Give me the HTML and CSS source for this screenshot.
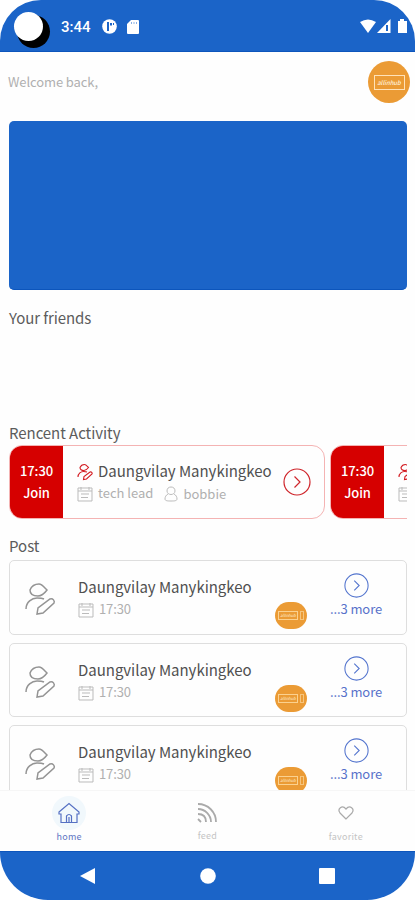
FILE: index.html
```html
<!DOCTYPE html>
<html lang="en">
<head>
<meta charset="utf-8">
<title>Home</title>
<link rel="stylesheet" href="styles.css">
</head>
<body>
<svg class="defs" width="0" height="0" aria-hidden="true">
  <symbol id="user-edit" viewBox="0 0 32 34">
    <path d="M6 8C8 3 11 2 15 2C18 2 20 5 23 8C20 12 18 14 14 14C9 14 6 12 6 8ZM2 27C2 20 8 16 13 16C16 16 18 16 20 17M13 32L14 26L26 17C29 16 31 19 30 21L19 31Z"/>
  </symbol>
  <symbol id="calendar" viewBox="0 0 16 16">
    <path d="M1 2H15V15H1ZM1 5H15M4 1V4M12 1V4M4 8H12M4 11.5H11"/>
  </symbol>
  <symbol id="person" viewBox="0 0 14 16">
    <path d="M7 1C4.500 1 3 2.500 3 5C3 7.200 5 8.500 7 8.500S11 7.200 11 5C11 2.500 9.500 1 7 1ZM4 8C2 9 1 11 1 13C1 15 4 15 7 15S13 15 13 13C13 11 12 9 10 8"/>
  </symbol>
  <symbol id="arrow" viewBox="0 0 28 28">
    <circle cx="14" cy="14" r="13"/><path d="M11.500 8.500L17 14L11.500 19.500"/>
  </symbol>
</svg>
<div class="phone">
  <header class="status">
    <span class="camera"></span>
    <span class="clock">3:44</span>
    <svg class="app" viewBox="0 0 15 15"><circle cx="7.500" cy="7.500" r="7.300" fill="#fff"/><path d="M5 3H7V12H5ZM8 4H10V6.500H8ZM11 4H12V6H11Z" fill="#1b64c8"/></svg>
    <svg class="sd" viewBox="0 0 12 14"><path d="M4 0H11Q12 0 12 1V13Q12 14 11 14H1Q0 14 0 13V4Z" fill="#fff"/><path d="M4 2H5V4H4ZM6.500 2H7.500V4H6.500ZM9 2H10V4H9Z" fill="#8bb0e4"/></svg>
    <span class="spacer"></span>
    <svg class="signals" viewBox="0 0 48 15"><path d="M0 3Q8 -2 16 3L8 14Z" fill="#fff"/><path d="M17 14L30.500 0V14Z" fill="#fff"/><path d="M26 6H28V12H26Z" fill="#1b64c8"/><path d="M38 2H40V0H44V2H47V14H38Z" fill="#fff"/></svg>
  </header>
  <main class="content">
    <div class="welcome">
      <span>Welcome back,</span>
      <span class="avatar"><b>allinhub</b></span>
    </div>
    <div class="banner"></div>
    <h2 class="friends">Your friends</h2>
    <h2 class="recent">Rencent Activity</h2>
    <div class="activities">
      <article class="activity">
        <div class="join"><span>17:30</span><span>Join</span></div>
        <div class="details">
          <div class="line"><svg class="edit"><use href="#user-edit"/></svg><span class="name">Daungvilay Manykingkeo</span></div>
          <div class="line meta"><svg class="cal"><use href="#calendar"/></svg><span>tech lead</span><svg class="person"><use href="#person"/></svg><span class="who">bobbie</span></div>
        </div>
        <svg class="go"><use href="#arrow"/></svg>
      </article>
      <article class="activity">
        <div class="join"><span>17:30</span><span>Join</span></div>
        <div class="details">
          <div class="line"><svg class="edit"><use href="#user-edit"/></svg></div>
          <div class="line meta"><svg class="cal"><use href="#calendar"/></svg></div>
        </div>
      </article>
    </div>
    <h2 class="posts-title">Post</h2>
    <div class="posts">
      <article class="post">
        <svg class="post-icon"><use href="#user-edit"/></svg>
        <div class="post-info"><span class="name">Daungvilay Manykingkeo</span><div class="time"><svg class="cal"><use href="#calendar"/></svg><span>17:30</span></div></div>
        <span class="badge"><i>allinhub</i><u></u></span>
        <div class="more"><svg><use href="#arrow"/></svg><span>...3 more</span></div>
      </article>
      <article class="post">
        <svg class="post-icon"><use href="#user-edit"/></svg>
        <div class="post-info"><span class="name">Daungvilay Manykingkeo</span><div class="time"><svg class="cal"><use href="#calendar"/></svg><span>17:30</span></div></div>
        <span class="badge"><i>allinhub</i><u></u></span>
        <div class="more"><svg><use href="#arrow"/></svg><span>...3 more</span></div>
      </article>
      <article class="post">
        <svg class="post-icon"><use href="#user-edit"/></svg>
        <div class="post-info"><span class="name">Daungvilay Manykingkeo</span><div class="time"><svg class="cal"><use href="#calendar"/></svg><span>17:30</span></div></div>
        <span class="badge"><i>allinhub</i><u></u></span>
        <div class="more"><svg><use href="#arrow"/></svg><span>...3 more</span></div>
      </article>
    </div>
  </main>
  <nav class="tabs">
    <a class="tab active"><span class="halo"><svg viewBox="0 0 22 22"><path d="M1 10L11 1.500L21 10V12H19V20.500H3V12H1ZM8.500 20V14Q11 11 13.500 14V20M11 15V20"/></svg></span><span>home</span></a>
    <a class="tab feed"><span class="halo"><svg viewBox="0 0 22 22"><path d="M2 2C12 2 20 10 20 20M2 7C9 7 15 13 15 20M2 12C7 12 10 15 10 20"/><path d="M2 17L5 20"/></svg></span><span>feed</span></a>
    <a class="tab favorite"><span class="halo"><svg viewBox="0 0 22 22"><path d="M11 17L5 11C2 7 7 2.500 11 7C15 2.500 20 7 17 11Z"/></svg></span><span>favorite</span></a>
  </nav>
  <footer class="system">
    <svg viewBox="0 0 18 18"><path d="M1 9L16 1V17Z"/></svg>
    <svg viewBox="0 0 18 18"><circle cx="9" cy="9" r="7.800"/></svg>
    <svg viewBox="0 0 18 18"><rect x="1" y="1" width="16" height="16" rx="1"/></svg>
  </footer>
</div>
</body>
</html>
```
FILE: styles.css
```css
* { box-sizing: border-box; }
body { margin: 0; background: #fff; font-family: "Noto Sans CJK SC", "Noto Sans", sans-serif; }
svg { display: block; flex: none; fill: none; stroke: none; }
.defs { position: absolute; }
.phone { width: 415px; height: 900px; display: flex; flex-direction: column; overflow: hidden; border-radius: 41px 41px 48px 48px; background: #fefefe; }
.status { height: 52px; flex: none; display: flex; align-items: center; padding: 2px 7px 0 14px; background: #1b64c8; border-bottom: 1px solid #0d55bc; }
.camera { width: 29px; height: 29px; border-radius: 50%; background: #fff; box-shadow: 5px 5px 0 2px #000; }
.clock { width: 30px; margin-left: 18px; color: #fff; font: 500 15px/20px Roboto, sans-serif; white-space: nowrap; }
.app { width: 15px; height: 15px; margin-left: 11px; }
.sd { width: 12px; height: 14px; margin-left: 10px; }
.spacer { flex: 1; }
.signals { width: 48px; height: 15px; }
.content { height: 738px; flex: none; overflow: hidden; padding: 0 8px 0 9px; }
.welcome { height: 69px; display: flex; justify-content: space-between; align-items: center; margin-right: -3px; color: #b0b0b0; font-size: 13px; letter-spacing: -.1px; padding-bottom: 9px; }
.welcome > span:first-child { margin: -2px 0 0 -1px; }
.avatar { width: 42px; height: 42px; border-radius: 50%; background: #eb9b35; display: flex; align-items: center; justify-content: center; }
.avatar b { width: 31px; height: 15px; border: 1px solid #ffe2b8; color: #fff0d9; font-size: 6px; line-height: 13px; text-align: center; letter-spacing: 0; font-weight: 500; font-style: italic; }
.banner { height: 169px; border-radius: 5px; background: #1b64c8; border-bottom: 1px solid #0c55bc; }
h2 { margin: 0; font-size: 15px; line-height: 22px; font-weight: 400; color: #5c5c5c; white-space: nowrap; }
.friends { margin-top: 17px; letter-spacing: -.1px; }
.recent { margin-top: 93px; letter-spacing: -.06px; }
.activities { height: 74px; margin-top: 1px; display: flex; gap: 5px; overflow: hidden; }
.activity { width: 316px; height: 74px; flex: none; border: 1px solid #f4b3b3; border-radius: 13px; display: flex; overflow: hidden; }
.join { width: 53px; flex: none; background: #d60000; color: #fff; font-size: 13px; font-weight: 500; line-height: 22px; letter-spacing: -.1px; display: flex; flex-direction: column; align-items: center; padding-top: 14px; }
.details { width: 198px; margin-left: 14px; padding-top: 13px; flex: none; }
.line { display: flex; align-items: center; height: 24px; white-space: nowrap; }
.edit { width: 16px; height: 18px; margin: 2px 4px 0 0; stroke: #d31c22; stroke-width: 2.2; }
.name { font-size: 15px; line-height: 24px; color: #505050; letter-spacing: -.03px; white-space: nowrap; }
.line .name { margin-left: 1px; }
.meta { height: 22px; color: #b0b0b0; font-size: 13px; padding-bottom: 1px; }
.meta > span { margin-top: -2px; }
.meta .cal { margin-right: 5px; }
.cal { width: 16px; height: 16px; stroke: #bbb; stroke-width: 1; }
.person { width: 14px; height: 16px; stroke: #bbb; margin: 0 5px 0 11px; }
.who { padding-top: 2px; }
.go { width: 28px; height: 28px; margin: 22px 0 0 8px; stroke: #cf252b; stroke-width: 1.2; }
.posts-title { margin-top: 16px; }
.posts { display: flex; flex-direction: column; gap: 8px; margin-top: 3px; }
.post { height: 74.700px; flex: none; border: 1px solid #dedede; border-radius: 5px; display: flex; }
.post-icon { width: 32px; height: 34px; margin: 21px 23px 0 14px; stroke: #949494; stroke-width: 1.5; }
.post-info { width: 178px; padding-top: 13px; flex: none; margin-left: -1px; }
.time { display: flex; gap: 5px; align-items: center; height: 20px; margin-top: 1px; font-size: 13px; letter-spacing: -.1px; color: #b0b0b0; }
.time span { margin-top: -3px; }
.badge { width: 32px; height: 27px; margin: 41px 23px 0 19px; border-radius: 14px; background: #eb9b35; display: flex; align-items: center; justify-content: center; gap: 2px; flex: none; }
.badge i { width: 20px; height: 9px; border: 1px solid #fbd18f; color: #fff0d9; font-size: 4px; line-height: 7px; text-align: center; }
.badge u { width: 4px; height: 9px; border: 1px solid #f6c57e; }
.more { width: 52px; display: flex; flex-direction: column; align-items: center; padding-top: 12px; color: #5872ca; font-size: 13px; line-height: 20px; white-space: nowrap; letter-spacing: -.1px; }
.more svg { width: 25px; height: 25px; stroke: #5475ce; stroke-width: 1.2; margin-bottom: 1px; }
.tabs { height: 61px; flex: none; display: flex; background: #fefefe; border-top: 1px solid #f6f6f6; }
.tab { flex: 1; display: flex; flex-direction: column; align-items: center; padding-top: 5px; color: #c4c4c4; font-size: 9px; line-height: 14px; letter-spacing: .25px; }
.halo { width: 34px; height: 34px; display: flex; align-items: center; justify-content: center; border-radius: 50%; }
.halo svg { width: 22px; height: 22px; stroke: #aaa; stroke-width: 1.2; }
.tab.active { color: #6075c3; }
.active .halo { background: #f1f8fc; }
.active svg { stroke: #5570c3; }
.feed .halo svg { stroke-width: 1.8; }
.feed > span:last-child { margin-top: -1px; }
.system { height: 49px; flex: none; display: flex; align-items: center; justify-content: space-between; background: #1b64c8; border-top: 1px solid #0d55bc; padding: 0 79px; }
.system svg { width: 18px; height: 18px; fill: #fff; }
```
